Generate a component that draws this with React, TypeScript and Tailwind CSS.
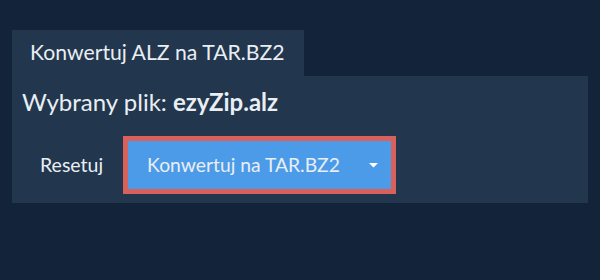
import React from 'react'

const App = () => {
    return (
        <div className="w-[600px] h-[280px] bg-[#12233a] pt-[30px] px-3 font-['Lato','Noto_Sans',sans-serif] text-[#e9eef4]">
            <div className="flex items-center w-[292px] h-[46px] pl-[18px] bg-[#22364d] text-[21.2px] whitespace-nowrap">
                Konwertuj ALZ na TAR.BZ2
            </div>
            <div className="w-[576px] h-[127px] bg-[#22364d] px-[10px] pt-[10px]">
                <p className="text-[24px] leading-[32px]">
                    Wybrany plik: <span className="font-bold">ezyZip.alz</span>
                </p>
                <div className="flex items-center mt-[18px]">
                    <button className="pl-[18px] pr-[20px] h-[58px] text-[19.5px]">Resetuj</button>
                    <div className="flex items-center h-[58px] w-[273px] border-[5px] border-[#d9615b] bg-[#4c9be8] pl-[19px] pr-[13px] text-[19.3px]">
                        <span className="flex-1 text-left">Konwertuj na TAR.BZ2</span>
                        <svg width="9" height="5" viewBox="0 0 9 5">
                            <path d="M0 0h9L4.5 4.5z" fill="#ffffff" />
                        </svg>
                    </div>
                </div>
            </div>
        </div>
    )
}

export default App
